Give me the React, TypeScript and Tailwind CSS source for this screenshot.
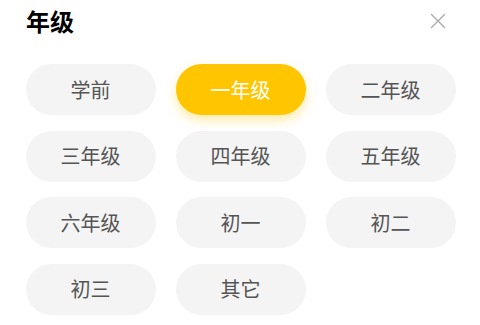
import { useState } from "react";

const GRADES = [
  "学前",
  "一年级",
  "二年级",
  "三年级",
  "四年级",
  "五年级",
  "六年级",
  "初一",
  "初二",
  "初三",
  "其它",
];

export default function App() {
  const [selected, setSelected] = useState("一年级");

  return (
    <div
      className="h-[325px] w-[480px] overflow-hidden bg-white"
      style={{ fontFamily: '"Noto Sans CJK SC", "Noto Sans", sans-serif' }}
    >
      <div className="flex h-[42px] items-center justify-between pl-[26px] pr-[34px]">
        <div className="text-[24px] font-bold leading-none text-black">年级</div>
        <button aria-label="关闭" className="text-[#aaaaaa]">
          <CloseIcon />
        </button>
      </div>

      <div className="mt-[22px] grid grid-cols-[repeat(3,130px)] gap-x-[20px] gap-y-[15.5px] px-[25.5px]">
        {GRADES.map((g) => {
          const active = g === selected;
          return (
            <button
              key={g}
              onClick={() => setSelected(g)}
              className={`flex h-[51px] items-center justify-center rounded-full text-[20px] font-normal leading-none ${
                active
                  ? "bg-[#ffc600] text-white shadow-[0_5px_12px_rgba(255,198,0,0.35)]"
                  : "bg-[#f4f4f4] text-[#555555]"
              }`}
            >
              {g}
            </button>
          );
        })}
      </div>
    </div>
  );
}

function CloseIcon() {
  return (
    <svg viewBox="0 0 16 16" className="size-[16px]" fill="none" aria-hidden>
      <path d="M1.5 1.5l13 13M14.5 1.5l-13 13" stroke="currentColor" strokeWidth="1.4" strokeLinecap="round" />
    </svg>
  );
}
